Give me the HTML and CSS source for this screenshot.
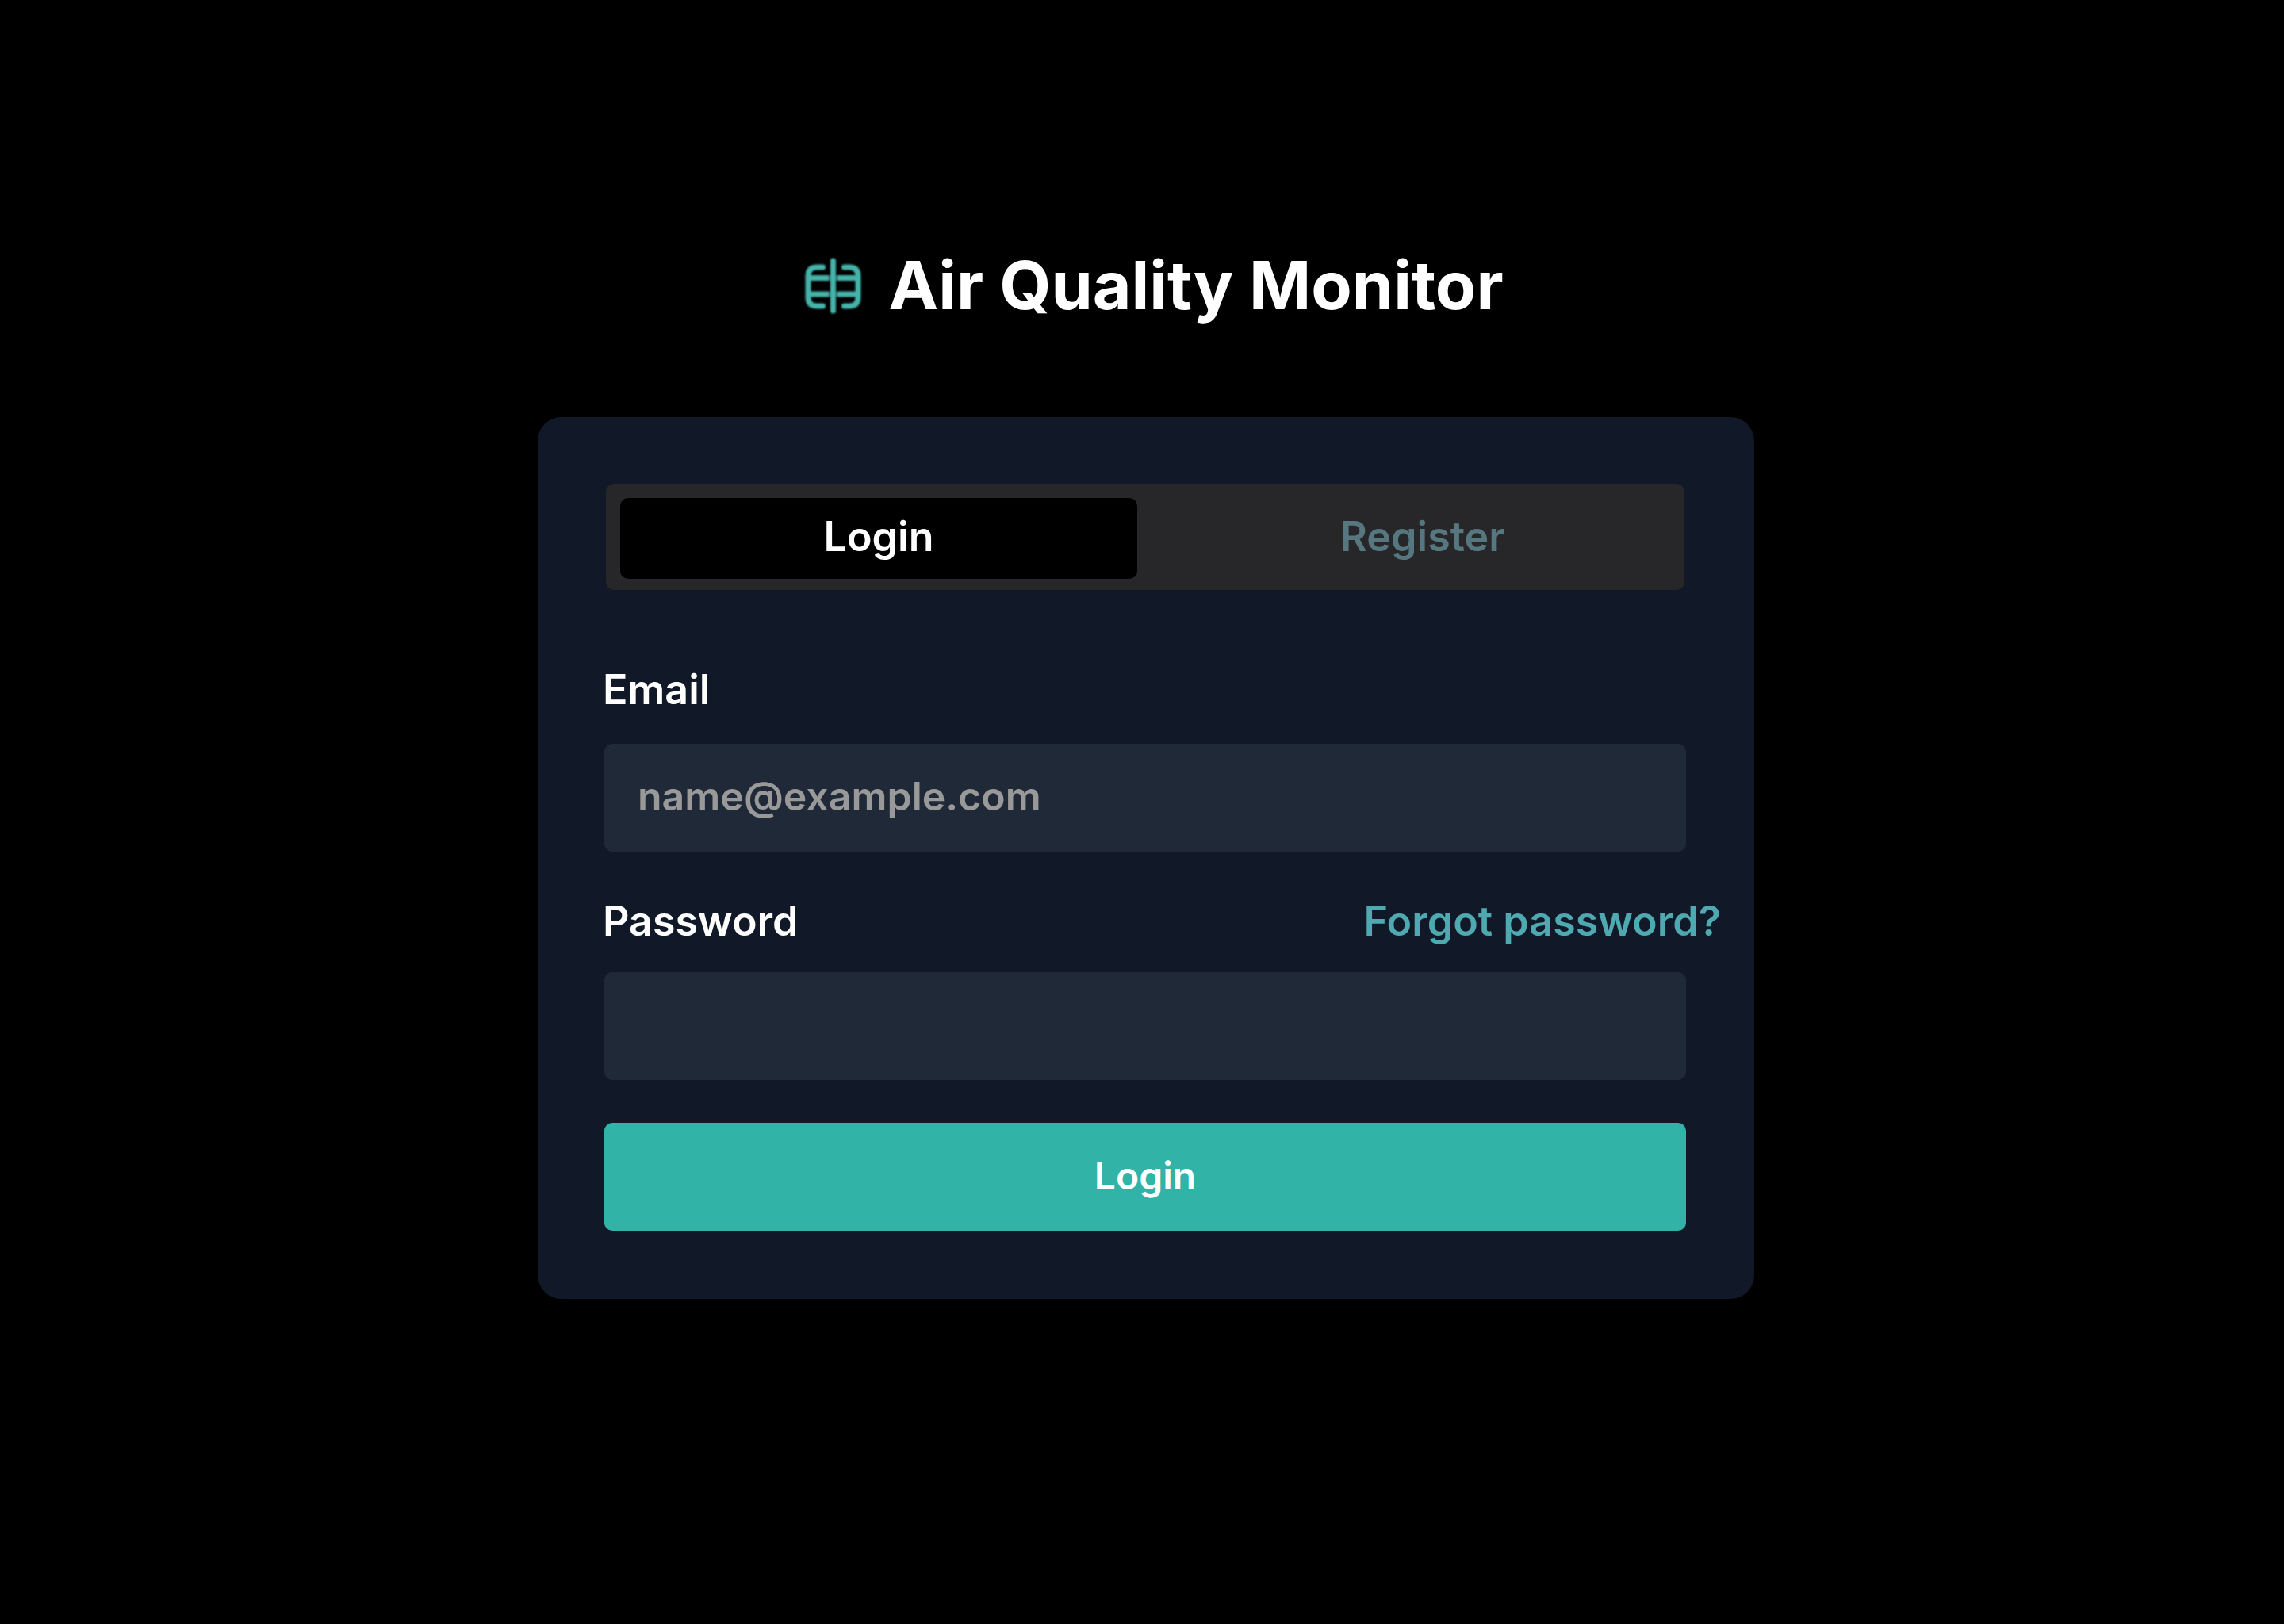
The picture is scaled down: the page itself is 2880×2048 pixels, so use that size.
FILE: index.html
```html
<!DOCTYPE html>
<html lang="en">
<head>
  <meta charset="utf-8">
  <meta name="viewport" content="width=device-width, initial-scale=1">
  <title>Air Quality Monitor</title>
  <link rel="stylesheet" href="styles.css">
</head>
<body>
  <main class="page">
    <header class="brand">
      <svg class="brand-icon" viewBox="0 0 80 80" aria-hidden="true">
        <path class="frame" d="M27.5 17H20Q9 17 9 28V55Q9 66 20 66H27.5M54.5 17H61Q72 17 72 28V55Q72 66 61 66H54.5M9 30.5H72M9 51H72"/>
        <path class="halo" d="M40.5 10V71"/>
        <path class="frame" d="M40.5 9V72"/>
      </svg>
      <h1 class="brand-name">Air Quality Monitor</h1>
    </header>

    <section class="card">
      <div class="tabs" role="tablist">
        <button class="tab tab-active" type="button" role="tab" aria-selected="true">Login</button>
        <button class="tab" type="button" role="tab" aria-selected="false">Register</button>
      </div>

      <form class="form">
        <div class="label-row label-row-email">
          <label class="label" for="email">Email</label>
        </div>
        <input class="field" id="email" type="email" placeholder="name@example.com">

        <div class="label-row label-row-password">
          <label class="label" for="password">Password</label>
          <a class="forgot" href="#">Forgot password?</a>
        </div>
        <input class="field" id="password" type="password">

        <button class="submit" type="submit">Login</button>
      </form>
    </section>
  </main>
</body>
</html>
```
FILE: styles.css
```css
* {
  box-sizing: border-box;
}

body {
  margin: 0;
  min-height: 100vh;
  background: #000;
  color: #fff;
  font-family: Inter, "Liberation Sans", sans-serif;
}

button,
input {
  margin: 0;
  border: 0;
  font: inherit;
  color: inherit;
}

.page {
  display: flex;
  flex-direction: column;
  align-items: center;
  padding: 312px 0 64px 10px;
}

.brand {
  display: flex;
  align-items: center;
  gap: 30px;
  padding-left: 16px;
  margin-bottom: 118px;
}

.brand-icon {
  width: 80px;
  height: 80px;
  filter: blur(1px);
}

.frame {
  fill: none;
  stroke: #45b3a9;
  stroke-width: 7;
  stroke-linecap: round;
}

.halo {
  fill: none;
  stroke: #000;
  stroke-opacity: 0.5;
  stroke-width: 11;
}

.brand-name {
  margin: 0;
  font-size: 84px;
  line-height: 96px;
  font-weight: 700;
}

.card {
  width: 100%;
  max-width: 1534px;
  padding: 84px 86px 86px 84px;
  border-radius: 30px;
  background: #111827;
}

.tabs {
  display: grid;
  grid-template-columns: 1fr 1fr;
  gap: 34px;
  margin: 0 2px;
  padding: 18px 4px 14px 18px;
  border-radius: 10px;
  background: #272729;
}

.tab {
  padding: 17px 0 21px;
  border-radius: 10px;
  background: transparent;
  color: #577780;
  font-size: 52px;
  line-height: 64px;
  font-weight: 600;
}

.tab-active {
  background: #000;
  color: #fff;
}

.label-row {
  display: flex;
  justify-content: space-between;
  margin-left: -2px;
  font-size: 52px;
  line-height: 64px;
  font-weight: 600;
}

.label-row-email {
  margin-top: 94px;
  margin-bottom: 36px;
}

.label-row-password {
  margin-top: 56px;
  margin-right: -44px;
  margin-bottom: 32px;
}

.forgot {
  color: #4fa9b0;
  text-decoration: none;
}

.field,
.submit {
  display: block;
  width: 100%;
  height: 136px;
  padding: 0 42px 4px;
  border-radius: 10px;
  font-size: 48px;
  font-weight: 600;
}

.field {
  background: #1f2937;
  font-size: 50px;
}

.field::placeholder {
  color: #999;
  opacity: 1;
}

.submit {
  margin-top: 54px;
  background: #31b3a8;
}
```
